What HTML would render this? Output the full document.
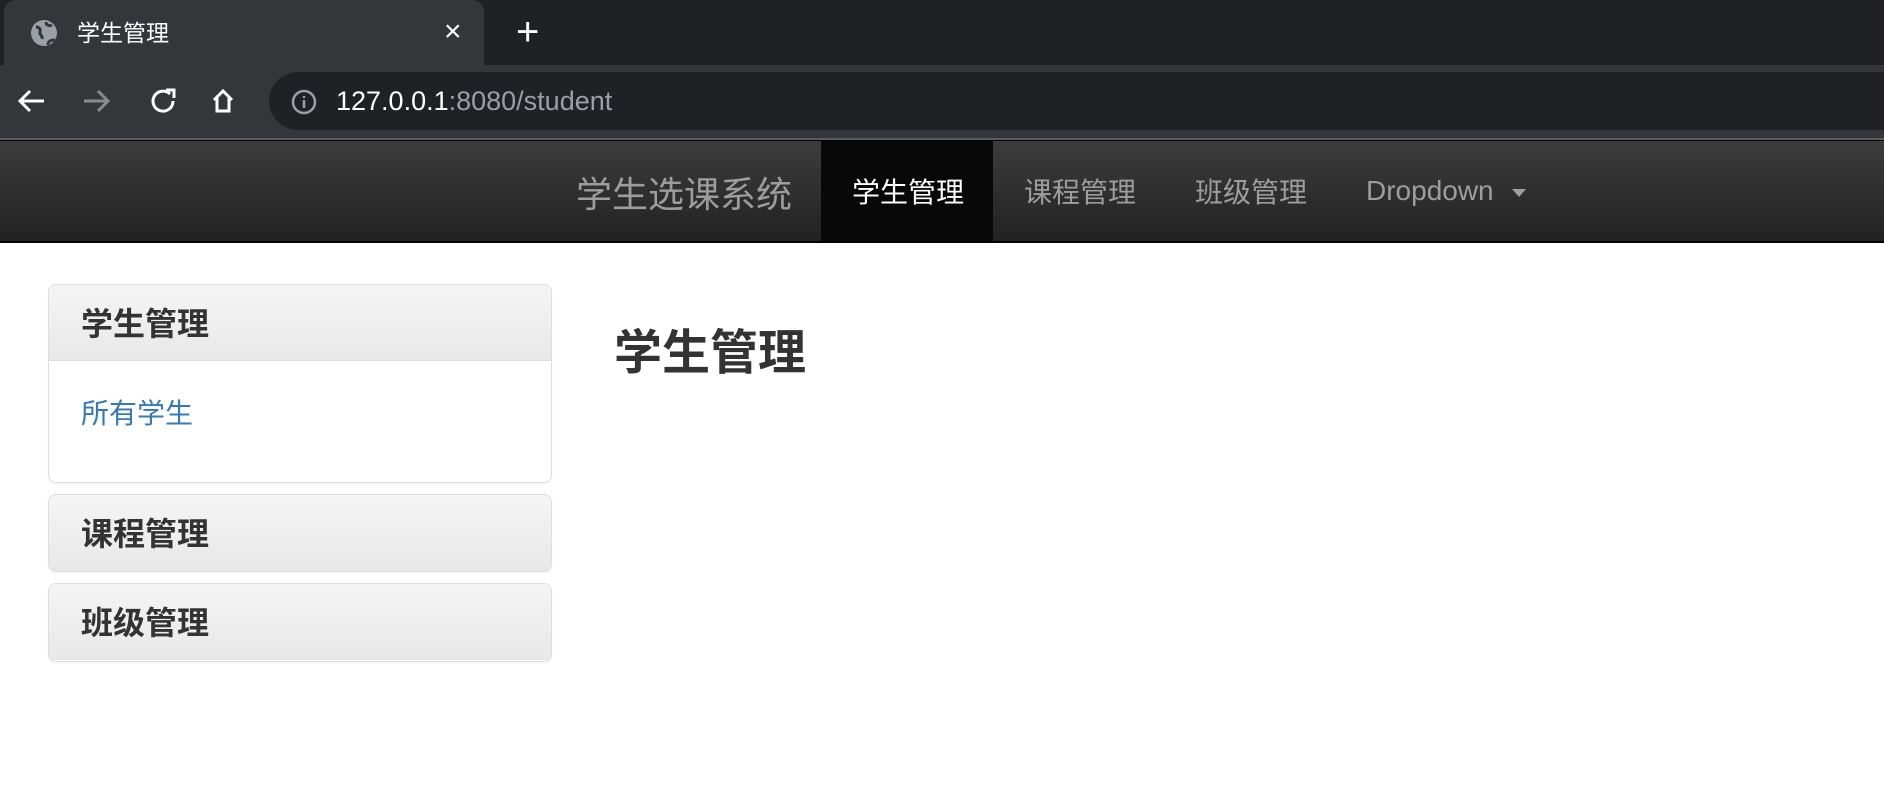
<!DOCTYPE html>
<html><head><meta charset="utf-8"><style>
*{margin:0;padding:0;box-sizing:border-box}
body{width:1884px;height:796px;background:#fff;font-family:"Liberation Sans","Noto Sans CJK SC",sans-serif;position:relative;overflow:hidden}
.abs{position:absolute}
.strip{left:0;top:0;width:1884px;height:65px;background:#202124}
.tab{left:4px;top:0;width:480px;height:65px;background:#35363a;border-radius:12px 12px 0 0}
.toolbar{left:0;top:65px;width:1884px;height:74px;background:#35363a}
.omni{left:269px;top:72px;width:1700px;height:58px;border-radius:29px;background:#202124}
.line{left:0;top:138px;width:1884px;height:3px;background:#5a5b5e;border-bottom:1px solid #000}
.nav{left:0;top:141px;width:1884px;height:102px;background:linear-gradient(#3c3c3c,#222);border-bottom:2px solid #000}
.nav span{position:absolute;font-size:28px;color:#9d9d9d;top:30px}
.panel{position:absolute;left:48px;width:504px;border:1px solid #ddd;border-radius:8px;overflow:hidden;box-shadow:0 1px 2px rgba(0,0,0,.05)}
.ph{height:76px;background:linear-gradient(#f5f5f5,#e8e8e8);font-size:32px;font-weight:bold;color:#333;padding:14px 0 0 32px}
</style></head><body>
<div class="abs strip"></div>
<div class="abs tab"></div>
<svg class="abs" style="left:30px;top:19px" width="28" height="28" viewBox="0 0 28 28"><circle cx="14" cy="14" r="13" fill="#9aa0a6"/><path d="M6 8c3 0 5 2 4 5s3 3 2 7M16 3c0 4 4 4 6 3M18 26c0-4 3-5 7-5" stroke="#35363a" stroke-width="3" fill="none"/></svg>
<div class="abs" style="left:77px;top:14px;font-size:23px;color:#fff">学生管理</div>
<div class="abs" style="left:444px;top:15px;font-size:30px;color:#fff">×</div>
<div class="abs" style="left:516px;top:10px;font-size:40px;color:#fff;font-weight:300">+</div>
<div class="abs toolbar"></div>
<svg class="abs" style="left:16px;top:86px" width="240" height="30" viewBox="0 0 240 30" fill="none" stroke-width="3">
<path d="M28 15H4M14 5L4 15l10 10" stroke="#fff"/>
<path d="M68 15h24M82 5l10 10-10 10" stroke="#8a8b8e"/>
<path d="M154 8a10 10 0 1 0 3 7" stroke="#fff"/><path d="M150 4h8v8" stroke="#fff"/>
<path d="M198 14l9-9 9 9M201 12v13h12V12" stroke="#fff"/>
</svg>
<div class="abs omni"></div>
<svg class="abs" style="left:291px;top:89px" width="26" height="26" viewBox="0 0 26 26"><circle cx="13" cy="13" r="11" stroke="#9aa0a6" stroke-width="2.5" fill="none"/><path d="M13 11v8M13 7v2" stroke="#9aa0a6" stroke-width="2.5"/></svg>
<div class="abs" style="left:336px;top:86px;font-size:27px;color:#fff">127.0.0.1<span style="color:#9aa0a6">:8080/student</span></div>
<div class="abs line"></div>
<div class="abs nav">
<span style="left:576px;top:25px;font-size:36px">学生选课系统</span>
<div class="abs" style="left:821px;top:0;width:172px;height:100px;background:#080808"></div>
<span style="left:852px;color:#fff">学生管理</span>
<span style="left:1024px">课程管理</span>
<span style="left:1195px">班级管理</span>
<span style="left:1366px;top:34px">Dropdown</span>
<svg class="abs" style="left:1512px;top:48px" width="14" height="8"><path d="M0 0h14L7 8z" fill="#9d9d9d"/></svg>
</div>
<div class="panel" style="top:284px;height:199px"><div class="ph" style="border-bottom:1px solid #ddd">学生管理</div>
<div style="padding:31px 0 0 32px;font-size:28px;color:#337ab7">所有学生</div></div>
<div class="panel" style="top:494px;height:78px"><div class="ph">课程管理</div></div>
<div class="panel" style="top:583px;height:79px"><div class="ph">班级管理</div></div>
<div class="abs" style="left:614px;top:313px;font-size:48px;font-weight:bold;color:#333">学生管理</div>
</body></html>
